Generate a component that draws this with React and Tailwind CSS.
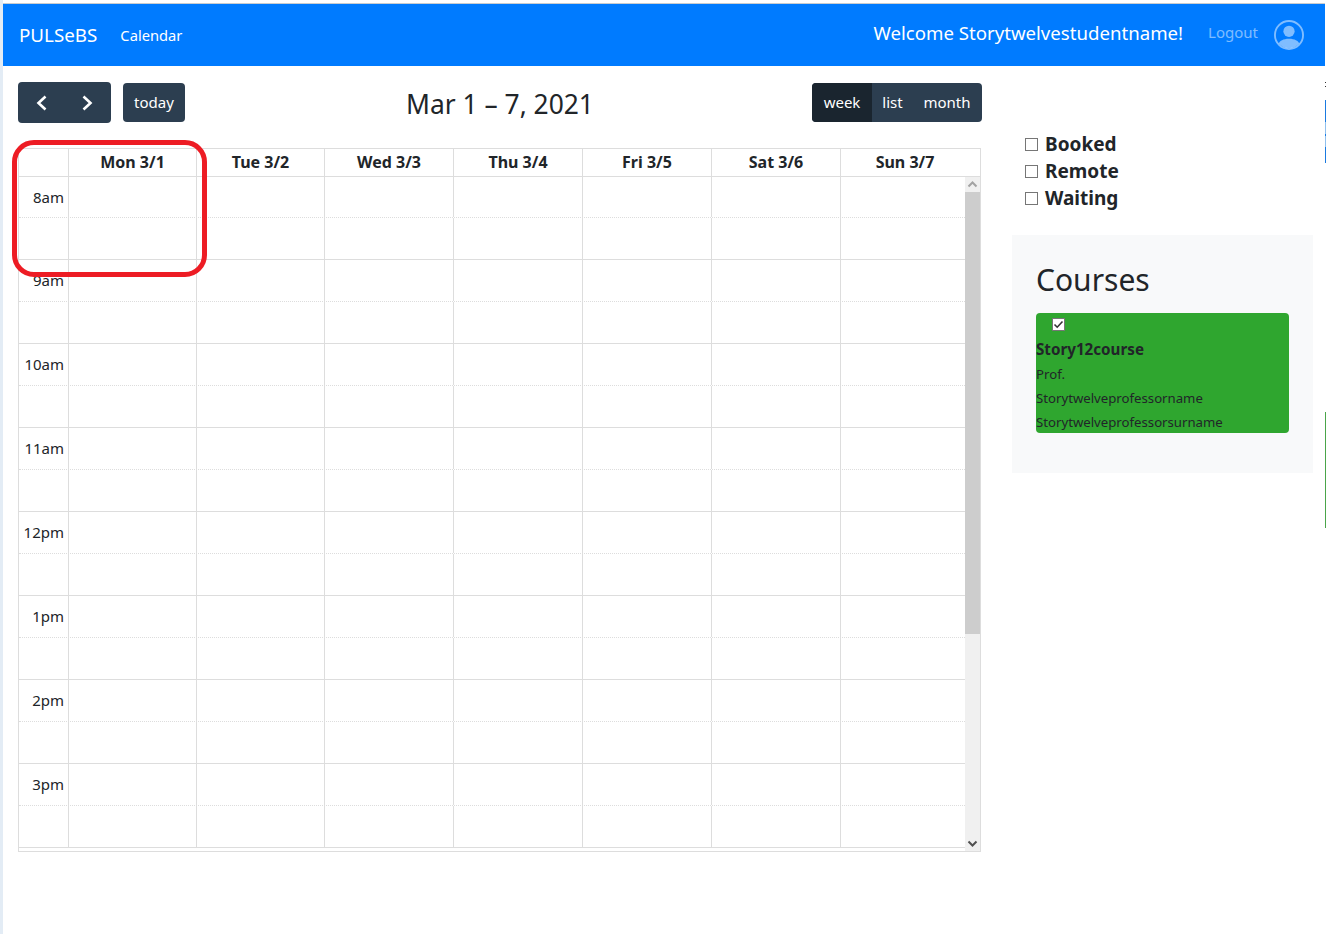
import React from "react";

const days = ["Mon 3/1", "Tue 3/2", "Wed 3/3", "Thu 3/4", "Fri 3/5", "Sat 3/6", "Sun 3/7"];
const hours = ["8am", "9am", "10am", "11am", "12pm", "1pm", "2pm", "3pm"];
const headWidths = ["w-[128px]", "w-[128px]", "w-[129px]", "w-[129px]", "w-[129px]", "w-[129px]", "w-[139px]"];
const cellWidths = ["w-[128px]", "w-[128px]", "w-[129px]", "w-[129px]", "w-[129px]", "w-[129px]", "w-[124px]"];

const Chevron = ({ dir, active }) => (
  <svg width="15" height="15" viewBox="0 0 15 15" className={active ? "text-[#505050]" : "text-[#a3a3a3]"}>
    <path
      d={dir === "up" ? "M3.5 9.5 7.5 5.5 11.5 9.5" : "M3.5 5.5 7.5 9.5 11.5 5.5"}
      fill="none"
      stroke="currentColor"
      strokeWidth="2"
    />
  </svg>
);

const SlotRow = ({ label, solid, first }) => (
  <div className={`flex h-[42px] ${solid ? "border-b border-[#ddd]" : "border-b border-dotted border-[#ddd]"}`}>
    <div
      className={`w-[50px] border-r border-[#ddd] pr-1 text-right text-[15px] text-[#212529] ${
        first ? "leading-[42px]" : "leading-[40px]"
      }`}
    >
      {label}
    </div>
    {cellWidths.map((w, i) => (
      <div key={i} className={`${w} ${i < 6 ? "border-r border-[#ddd]" : ""}`} />
    ))}
  </div>
);

const Calendar = () => (
  <div className="mt-[25px] h-[704px] w-[963px] border border-[#ddd]">
    <div className="flex h-[28px] border-b border-[#ddd]">
      <div className="w-[50px] border-r border-[#ddd]" />
      {days.map((d, i) => (
        <div
          key={d}
          className={`${headWidths[i]} ${i < 6 ? "border-r border-[#ddd]" : "pr-[11px]"} text-center text-[16px] font-bold leading-[27px] text-[#212529]`}
        >
          {d}
        </div>
      ))}
    </div>
    <div className="flex h-[674px]">
      <div className="w-[946px] overflow-hidden">
        <div className="-mt-px">
          {hours.map((h, i) => (
            <div key={h}>
              <SlotRow label={h} first={i === 0} />
              <SlotRow solid />
            </div>
          ))}
        </div>
      </div>
      <div className="flex w-[15px] flex-col bg-[#f0f0f0]">
        <Chevron dir="up" />
        <div className="h-[442px] bg-[#cdcdcd]" />
        <div className="flex-1" />
        <Chevron dir="down" active />
      </div>
    </div>
  </div>
);

const Toolbar = () => (
  <div className="flex h-[41px] w-[964px] items-center justify-between">
    <div className="flex items-center">
      <div className="flex h-[41px] w-[93px] items-center rounded bg-[#2c3e50] text-white">
        <svg width="46" height="16" viewBox="0 0 46 16" fill="none" stroke="currentColor" strokeWidth="2.6">
          <path d="M27.5 1.5 20.5 8l7 6.5" />
        </svg>
        <svg width="46" height="16" viewBox="0 0 46 16" fill="none" stroke="currentColor" strokeWidth="2.6">
          <path d="M19.5 1.5 26.5 8l-7 6.5" />
        </svg>
      </div>
      <button className="ml-3 h-[39px] w-[62px] rounded bg-[#2c3e50] text-[15px] text-white">today</button>
    </div>
    <h2 className="ml-[3px] translate-y-[2px] text-[26.4px] leading-[41px] text-[#212529]">Mar 1 – 7, 2021</h2>
    <div className="flex h-[39px] overflow-hidden rounded bg-[#2c3e50] text-[15px] leading-[39px] text-white">
      <span className="w-[60px] bg-[#1a252f] text-center">week</span>
      <span className="w-[42px] pr-[1px] text-center">list</span>
      <span className="w-[68px] pr-[2px] text-center">month</span>
    </div>
  </div>
);

const Box = ({ checked }) => (
  <span className="flex h-[13px] w-[13px] items-center justify-center border border-[#767676] bg-white">
    {checked && (
      <svg width="11" height="11" viewBox="0 0 11 11" fill="none" stroke="#333" strokeWidth="1.6">
        <path d="M1.5 5.5 4.2 8.2 9.5 2.5" />
      </svg>
    )}
  </span>
);

const Sidebar = () => (
  <div className="ml-[30px] w-[301px]">
    <div className="flex flex-col pl-[13px] pt-[49px]">
      {["Booked", "Remote", "Waiting"].map((label) => (
        <label key={label} className="flex h-[27px] items-center gap-[7px] text-[19px] font-bold text-[#212529]">
          <Box />
          {label}
        </label>
      ))}
    </div>
    <div className="mt-[23px] h-[238px] bg-[#f8f9fa] px-6 pt-[22px]">
      <h3 className="text-[30px] leading-[46px] text-[#212529]">Courses</h3>
      <div className="mt-[10px] h-[120px] rounded bg-[#2fa62f] text-[#212529]">
        <div className="flex h-[24px] items-start pl-4 pt-[5px]">
          <Box checked />
        </div>
        <div className="text-[15.2px] font-bold leading-[25px]">Story12course</div>
        <div className="text-[13.2px] leading-[24px]">Prof.</div>
        <div className="text-[13.2px] leading-[24px]">Storytwelveprofessorname</div>
        <div className="text-[13.2px] leading-[24px]">Storytwelveprofessorsurname</div>
      </div>
    </div>
  </div>
);

const Navbar = () => (
  <div className="flex h-[62px] items-center bg-[#007bff] pl-4 pr-[21px] text-white">
    <span className="text-[18.8px]">PULSeBS</span>
    <span className="ml-[23px] text-[14.7px]">Calendar</span>
    <span className="mb-1 ml-auto text-[18.64px]">Welcome Storytwelvestudentname!</span>
    <span className="mb-[6px] ml-[25px] text-[15px] text-white/50">Logout</span>
    <svg className="ml-4 text-white/50" width="30" height="30" viewBox="0 0 16 16" fill="currentColor">
      <path d="M13.468 12.37C12.758 11.226 11.195 10 8 10s-4.757 1.225-5.468 2.37A6.987 6.987 0 0 0 8 15a6.987 6.987 0 0 0 5.468-2.63z" />
      <path fillRule="evenodd" d="M8 9a3 3 0 1 0 0-6 3 3 0 0 0 0 6z" />
      <path fillRule="evenodd" d="M8 1a7 7 0 1 0 0 14A7 7 0 0 0 8 1zM0 8a8 8 0 1 1 16 0A8 8 0 0 1 0 8z" />
    </svg>
  </div>
);

export default function App() {
  return (
    <div className="relative flex h-[934px] overflow-hidden bg-white font-['Noto_Sans',sans-serif]">
      <div className="w-[3px] bg-[#e3ecf5]" />
      <div className="w-[1322px]">
        <div className="h-[3px]" />
        <div className="h-px bg-[#c8ccd0]" />
        <Navbar />
        <div className="flex pl-[15px] pt-4">
          <div>
            <Toolbar />
            <Calendar />
          </div>
          <Sidebar />
        </div>
      </div>
      {/* red annotation drawn over the screenshot */}
      <div className="absolute left-[12px] top-[140px] h-[137px] w-[195px] rounded-[22px] border-[5px] border-[#ed1c24]" />
      {/* slivers of another window along the right edge */}
      <div className="absolute left-[1325px] top-[82px] h-px w-px bg-[#333]" />
      <div className="absolute left-[1325px] top-[86px] h-px w-px bg-[#333]" />
      <div className="absolute left-[1325px] top-[100px] h-[63px] w-px bg-[#1a7ae0]" />
      <div className="absolute left-[1325px] top-[122px] h-[12px] w-px bg-[#8fc0ee]" />
      <div className="absolute left-[1325px] top-[136px] h-[11px] w-px bg-[#8fc0ee]" />
      <div className="absolute left-[1325px] top-[412px] h-[116px] w-px bg-[#4aa54a]" />
    </div>
  );
}
